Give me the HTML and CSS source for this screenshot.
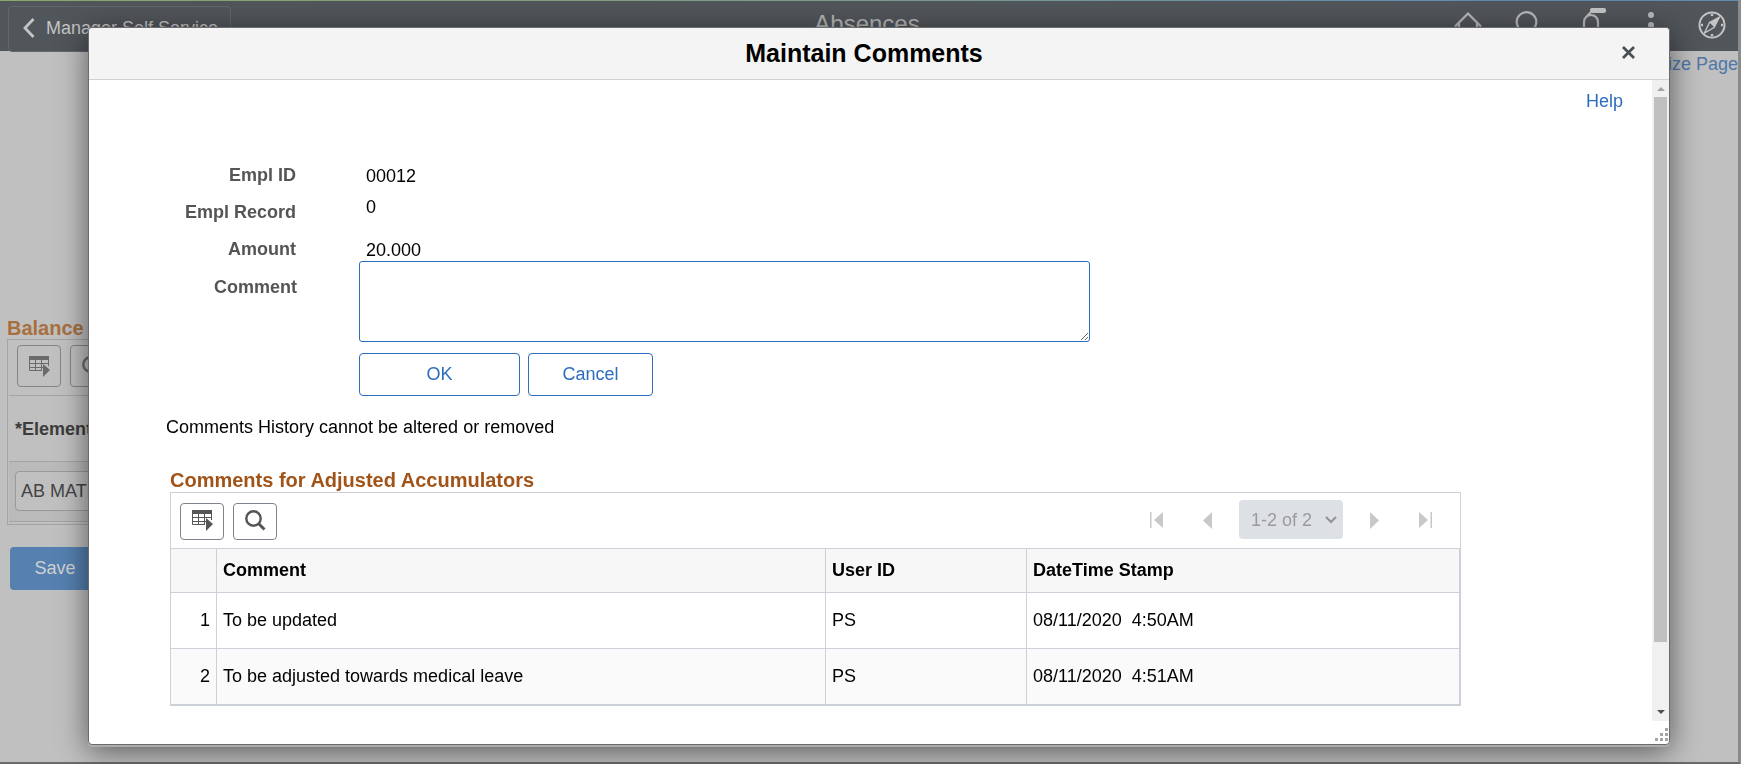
FILE: index.html
```html
<!DOCTYPE html>
<html lang="en">
<head>
<meta charset="utf-8">
<title>Absences - Maintain Comments</title>
<link rel="stylesheet" href="styles.css">
</head>
<body>
<div class="page">
  <header class="banner">
    <button class="back" type="button">
      <svg width="12" height="20" viewBox="0 0 12 20"><path d="M10.500 1L2 10l8.500 9" fill="none" stroke="#c4c4c4" stroke-width="2.800"/></svg>
      Manager Self Service
    </button>
    <h1 class="banner-title">Absences</h1>
    <nav class="banner-icons">
      <svg width="28" height="28" viewBox="0 0 28 28" fill="none" stroke="#b9b9b9" stroke-width="2.200"><path d="M1 15.500L14 2.500l13 13M5 12v14h18V12"/></svg>
      <svg width="28" height="28" viewBox="0 0 28 28" fill="none" stroke="#b9b9b9" stroke-width="2.200"><circle cx="11.500" cy="11" r="9.800"/><path d="M19 18l8 8"/></svg>
      <svg width="28" height="28" viewBox="0 0 28 28"><path d="M8 24V11a7 7 0 0 1 14 0v13M11 5l4-4" fill="none" stroke="#b9b9b9" stroke-width="2.200"/><rect x="14" y="-3" width="16" height="5" rx="2" fill="#c4c4c4"/></svg>
      <svg width="28" height="28" viewBox="0 0 28 28" fill="#b9b9b9"><circle cx="14" cy="4" r="3"/><circle cx="14" cy="14" r="3"/><circle cx="14" cy="24" r="3"/></svg>
      <svg width="28" height="28" viewBox="0 0 28 28" fill="none" stroke="#c4c4c4" stroke-width="2"><circle cx="14" cy="14" r="12.500"/><path d="M21.500 6L11.500 11.500 6.500 22l9.500-5.500z" stroke-width="1.400"/><path d="M21.500 6L11.500 11.500l5 5z" fill="#c4c4c4" stroke="none"/><path d="M14 3v2M14 23v2M3 14h2M23 14h2" stroke-width="2.500"/></svg>
    </nav>
  </header>
  <div class="page-links"><a href="#">Personalize Page</a></div>
  <main class="balance">
    <h2 class="balance-title">Balance Adjustments</h2>
    <div class="balance-grid">
      <div class="balance-tools">
        <button class="tool dim" type="button" aria-label="Grid actions">
          <svg width="21" height="21" viewBox="0 0 21 21"><path d="M0 0h20v4H0z" fill="currentColor"/><path d="M.5 4v10.500H13M1 7.500h19M1 11.500h13M6.500 4v11M12.500 4v11M19.500 4v6" fill="none" stroke="currentColor"/><path d="M14 8l7 6-7 7z" fill="currentColor"/></svg>
        </button>
        <button class="tool dim" type="button" aria-label="Find">
          <svg width="21" height="21" viewBox="0 0 21 21" fill="none" stroke="currentColor"><circle cx="8.500" cy="8.500" r="7.200" stroke-width="2.400"/><path d="M13.500 13.500l6 6" stroke-width="3"/></svg>
        </button>
      </div>
      <div class="balance-head">*Element Name</div>
      <div class="balance-row"><input class="balance-input" type="text" value="AB MATERNITY" aria-label="Element Name"></div>
    </div>
    <button class="save" type="button">Save</button>
  </main>
</div>

<div class="overlay">
  <section class="dialog" role="dialog" aria-labelledby="dialog-title">
    <header class="dialog-head">
      <h2 id="dialog-title" class="dialog-title">Maintain Comments</h2>
      <button class="close" type="button" aria-label="Close">
        <svg width="13" height="13" viewBox="0 0 13 13"><path d="M1 1l11 11M12 1L1 12" stroke="#4b4f54" stroke-width="2.800"/></svg>
      </button>
    </header>
    <div class="dialog-body">
      <div class="content">
        <div class="help"><a href="#">Help</a></div>
        <form class="form">
          <dl class="facts">
            <dt>Empl ID</dt><dd>00012</dd>
            <dt>Empl Record</dt><dd class="raised">0</dd>
            <dt>Amount</dt><dd>20.000</dd>
          </dl>
          <div class="comment-row">
            <label class="comment-label" for="comment">Comment</label>
            <textarea id="comment" class="comment-box"></textarea>
          </div>
          <div class="actions">
            <button class="btn ok" type="button">OK</button>
            <button class="btn" type="button">Cancel</button>
          </div>
        </form>
        <p class="note">Comments History cannot be altered or removed</p>
        <h3 class="grid-title">Comments for Adjusted Accumulators</h3>
        <div class="grid">
          <div class="toolbar">
            <button class="tool" type="button" aria-label="Grid actions">
              <svg width="21" height="21" viewBox="0 0 21 21"><path d="M0 0h20v4H0z" fill="currentColor"/><path d="M.5 4v10.500H13M1 7.500h19M1 11.500h13M6.500 4v11M12.500 4v11M19.500 4v6" fill="none" stroke="currentColor"/><path d="M14 8l7 6-7 7z" fill="currentColor"/></svg>
            </button>
            <button class="tool" type="button" aria-label="Find">
              <svg width="21" height="21" viewBox="0 0 21 21" fill="none" stroke="currentColor"><circle cx="8.500" cy="8.500" r="7.200" stroke-width="2.400"/><path d="M13.500 13.500l6 6" stroke-width="3"/></svg>
            </button>
            <div class="pager">
              <button class="page-btn" type="button" aria-label="First" disabled><svg width="14" height="18" viewBox="0 0 14 18" fill="#c8c8c8"><path d="M0 1h1.500v16H0zM13 1v16L4 9z"/></svg></button>
              <button class="page-btn" type="button" aria-label="Previous" disabled><svg width="14" height="18" viewBox="0 0 14 18" fill="#c8c8c8"><path d="M12 1v17L3 9.500z"/></svg></button>
              <select class="range" aria-label="Rows shown" disabled><option>1-2 of 2</option></select>
              <button class="page-btn" type="button" aria-label="Next" disabled><svg width="14" height="18" viewBox="0 0 14 18" fill="#c8c8c8"><path d="M2 1v17l9-8.500z"/></svg></button>
              <button class="page-btn" type="button" aria-label="Last" disabled><svg width="14" height="18" viewBox="0 0 14 18" fill="#c8c8c8"><path d="M12.500 1H14v16h-1.500zM1 1v16l9-8z"/></svg></button>
            </div>
          </div>
          <table class="rows">
            <colgroup><col class="c-num"><col class="c-comment"><col class="c-user"><col></colgroup>
            <thead><tr><th></th><th>Comment</th><th>User ID</th><th>DateTime Stamp</th></tr></thead>
            <tbody>
              <tr><td>1</td><td>To be updated</td><td>PS</td><td>08/11/2020&nbsp; 4:50AM</td></tr>
              <tr><td>2</td><td>To be adjusted towards medical leave</td><td>PS</td><td>08/11/2020&nbsp; 4:51AM</td></tr>
            </tbody>
          </table>
        </div>
      </div>
      <div class="scrollbar">
        <svg width="8" height="4" viewBox="0 0 8 4"><path d="M0 4l4-4 4 4z" fill="#a3a3a3"/></svg>
        <div class="thumb"></div>
        <svg width="8" height="4" viewBox="0 0 8 4"><path d="M0 0l4 4 4-4z" fill="#505050"/></svg>
      </div>
    </div>
    <footer class="dialog-foot">
      <svg width="14" height="14" viewBox="0 0 14 14" fill="#a4a4a4"><path d="M11 0h3v3h-3zM6 5h3v3H6zM11 5h3v3h-3zM1 10h3v3H1zM6 10h3v3H6zM11 10h3v3h-3z"/></svg>
    </footer>
  </section>
</div>
</body>
</html>
```
FILE: styles.css
```css
* { box-sizing: border-box; }

body {
  margin: 0;
  font-family: "Liberation Sans", Arial, sans-serif;
  font-size: 18px;
  line-height: 20px;
  color: #000;
  overflow: hidden;
}

h1, h2, h3, p, dl, dd { margin: 0; }
button, input, select, textarea { font: inherit; }
svg { display: block; flex: none; overflow: visible; }
a { color: #2c6dc0; text-decoration: none; }

/* Page behind the dialog */
.page {
  height: 100vh;
  background: #c0c0c0;
  border-right: 3px solid #8b8b8b;
  border-bottom: 2px solid #6b6b6b;
  overflow: hidden;
}

.banner {
  display: grid;
  grid-template-columns: 1fr auto 1fr;
  height: 51px;
  padding: 6px 12px 0 8px;
  background:
    linear-gradient(to right, #8aa76a, #7a9a92 55%, #6289b4 85%) top / 100% 1px no-repeat,
    #51565b;
}

.back {
  display: flex;
  align-items: center;
  justify-self: start;
  gap: 11px;
  width: 223px;
  height: 46px;
  padding: 0 0 2px 14px;
  border: 1px solid #63676b;
  border-radius: 4px;
  background: none;
  color: #c4c4c4;
}

.banner-title {
  padding-top: 4px;
  font-size: 24px;
  line-height: 28px;
  font-weight: 400;
  color: #b4b4b4;
}

.banner-icons {
  display: flex;
  justify-content: flex-end;
  gap: 33px;
  padding-top: 5px;
}

.page-links {
  display: flex;
  justify-content: flex-end;
  padding-top: 3px;
}
.page-links a { color: #4f77a8; }

.balance {
  width: 80%;
  padding: 243px 7px 0;
}

.balance-title {
  font-size: 20px;
  line-height: 22px;
  color: #a8703f;
}

.balance-grid {
  padding-left: 1px;
  height: 186px;
  border: 1px solid #a4a4a4;
}

.balance-tools {
  display: flex;
  gap: 9px;
  height: 56px;
  padding: 5px 8px;
  border-bottom: 1px solid #a4a4a4;
}
.balance-tools .tool { height: 42px; }

.balance-head {
  height: 66px;
  padding: 23px 6px;
  font-weight: 700;
  color: #3c3c3c;
  border-bottom: 1px solid #a4a4a4;
}

.balance-row {
  height: 60px;
  padding: 9px 6px;
  background: #bababa;
  border-bottom: 1px solid #a4a4a4;
}

.balance-input {
  width: 200px;
  height: 40px;
  padding: 0 5px;
  border: 1px solid #999;
  border-radius: 4px;
  background: #c0c0c0;
  color: #444;
}

.save {
  width: 90px;
  height: 43px;
  margin: 22px 3px;
  padding: 0 7px 2px;
  border: 0;
  border-radius: 4px;
  background: #5580b0;
  color: #d0d0d0;
}

/* Dialog */
.overlay {
  position: fixed;
  inset: 0;
  display: flex;
  padding: 27px 71px 19px 88px;
}

.dialog {
  flex: 1;
  display: flex;
  flex-direction: column;
  border: 1px solid #6c6c6c;
  border-radius: 4px;
  background: #fff;
  box-shadow: 0 2px 0 #acacac, 0 6px 30px rgba(0, 0, 0, 0.55);
}

.dialog-head {
  display: grid;
  grid-template-columns: 1fr auto 1fr;
  align-items: center;
  height: 52px;
  padding: 0 34px 2px;
  background: #f4f4f4;
  border-bottom: 1px solid #d0d1d6;
  border-radius: 4px 4px 0 0;
}

.dialog-title {
  grid-column: 2;
  padding-right: 30px;
  font-size: 25px;
  line-height: 28px;
}

.close {
  justify-self: end;
  padding: 0;
  border: 0;
  background: none;
}

.dialog-body { flex: 1; display: flex; }

.content {
  flex: 1;
  padding: 11px 29px 0 77px;
}

.help { text-align: right; }

.form { padding-top: 53px; }

.facts {
  display: grid;
  grid-template-columns: 130px 1fr;
  column-gap: 70px;
  grid-auto-rows: 37px;
  line-height: 24px;
}
.facts dt {
  text-align: right;
  line-height: 22px;
  font-weight: 700;
  color: #555;
}
.facts .raised { line-height: 12px; }

.comment-row { display: flex; margin-top: -14px; }

.comment-label {
  width: 193px;
  padding: 16px 62px 0 0;
  text-align: right;
  font-weight: 700;
  color: #555;
}

.comment-box {
  width: 731px;
  height: 81px;
  border: 1px solid #2c6dc0;
  border-radius: 3px;
}

.actions {
  display: flex;
  gap: 8px;
  padding: 11px 0 0 193px;
}

.btn {
  width: 125px;
  height: 43px;
  padding: 0 0 2px;
  border: 1px solid #2c6dc0;
  border-radius: 4px;
  background: #fff;
  color: #2c6dc0;
}
.ok { width: 161px; }

.note { padding-top: 21px; }

.grid-title {
  padding: 32px 4px 0;
  font-size: 20px;
  line-height: 23px;
  color: #a25418;
}

.grid {
  margin: 0 162px 0 4px;
  border: 1px solid #ccd1d9;
}

.toolbar {
  display: flex;
  gap: 9px;
  height: 55px;
  padding: 10px 23px 0 9px;
}

.tool {
  display: flex;
  justify-content: center;
  width: 44px;
  height: 37px;
  padding: 6px 0 0;
  border: 1px solid #7c838c;
  border-radius: 4px;
  background: none;
  color: #555;
}
.dim { padding-top: 10px; color: #6b6b6b; border-color: #858585; }

.pager {
  display: flex;
  align-items: center;
  gap: 26px;
  height: 39px;
  margin: -3px 0 0 auto;
}

.page-btn {
  width: 24px;
  padding: 0 5px;
  border: 0;
  background: none;
}

.range {
  width: 104px;
  height: 39px;
  margin: 0 -6px;
  padding: 0 0 0 12px;
  border: 0;
  border-radius: 4px;
  appearance: none;
  color: #999b9f;
  opacity: 1;
  background: #dde0e5 url("data:image/svg+xml,%3Csvg xmlns='http://www.w3.org/2000/svg' width='12' height='8'%3E%3Cpath d='M1 1l5 5 5-5' fill='none' stroke='%23909398' stroke-width='2'/%3E%3C/svg%3E") no-repeat right 6px center;
}

.rows {
  width: 100%;
  table-layout: fixed;
  border-collapse: separate;
  border-spacing: 0;
  border-right: 1px solid #ccd1d9;
  border-bottom: 1px solid #ccd1d9;
}
.c-num { width: 45px; }
.c-comment { width: 609px; }
.c-user { width: 201px; }

.rows th, .rows td {
  height: 56px;
  padding: 0 6px 2px;
  text-align: left;
  border-top: 1px solid #ccd1d9;
}
.rows th { height: 44px; background: #f7f7f7; }
.rows th + th, .rows td + td { border-left: 1px solid #ccd1d9; }
.rows td:first-child { text-align: right; }
.rows tbody tr:nth-child(even) { background: #fafafa; }

.scrollbar {
  display: flex;
  flex-direction: column;
  align-items: center;
  width: 17px;
  padding: 7px 0;
  background: #f0f0f0;
}
.scrollbar .thumb {
  flex: 1;
  width: 13px;
  margin: 6px 0 68px;
  background: #c0c0c0;
}

.dialog-foot {
  display: flex;
  justify-content: flex-end;
  height: 23px;
  padding: 7px 1px 0;
}
```
